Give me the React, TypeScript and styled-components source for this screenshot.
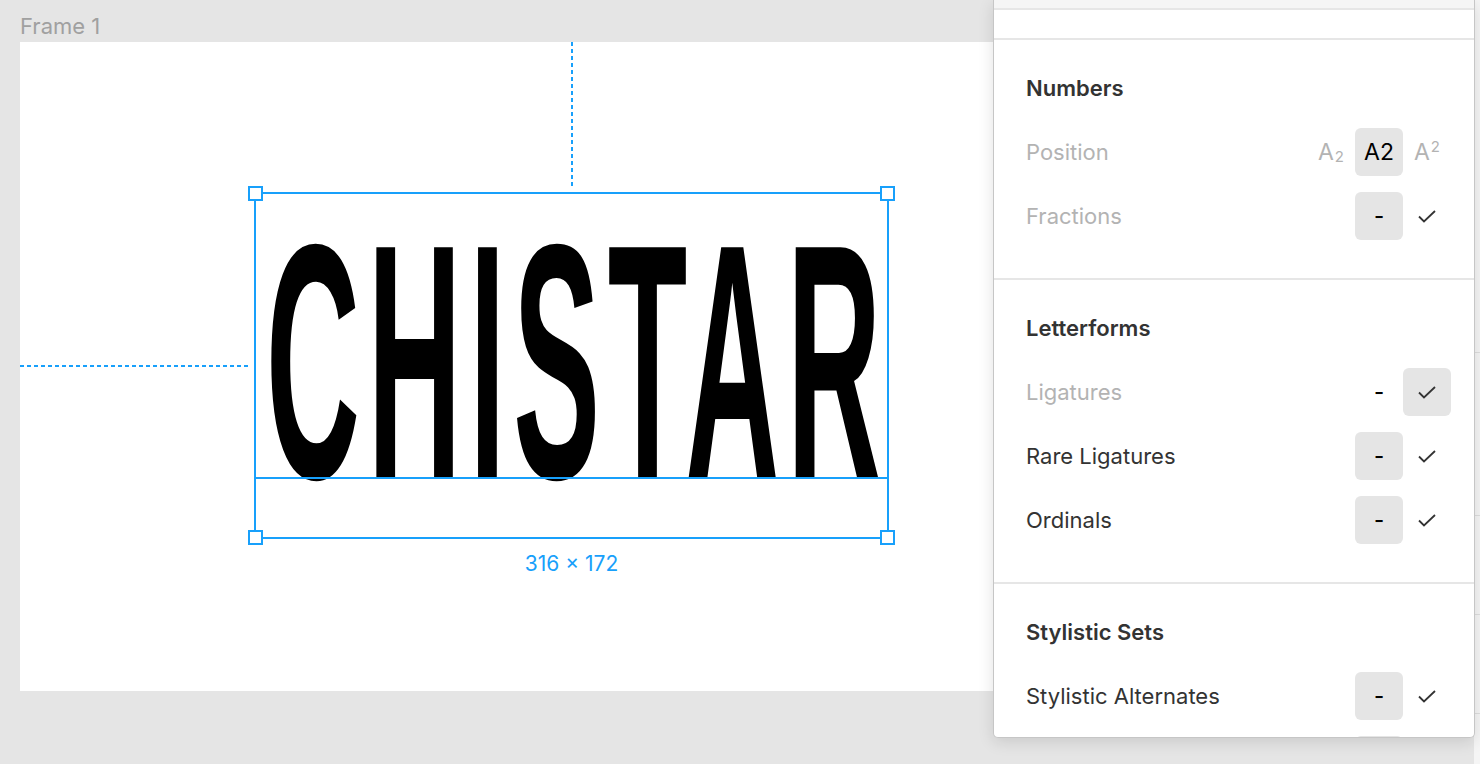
import React from "react"
import styled, {createGlobalStyle} from "styled-components"

const GlobalStyle = createGlobalStyle`
    html, body {
        margin: 0;
        padding: 0;
        height: 100%;
        overflow: hidden;
        font-family: Inter, "Noto Sans", sans-serif;
    }
`;

const BLUE = "#18a0fb";

const Page = styled.div`
    position: relative;
    display: flex;
    height: 100vh;
    overflow: hidden;
`;

const Canvas = styled.main`
    flex: 1;
    display: flex;
    flex-direction: column;
    padding: 0 20px;
    background: #e5e5e5;
    overflow: hidden;
`;

const FrameLabel = styled.div`
    height: 42px;
    box-sizing: border-box;
    padding-top: 13px;
    font-size: 22px;
    line-height: 26px;
    color: #a0a0a0;
`;

const Frame = styled.div`
    position: relative;
    flex-shrink: 0;
    width: 1000px;
    height: 649px;
    background: #fff;
`;

const VGuide = styled.div`
    position: absolute;
    left: 551px;
    top: 0;
    width: 2px;
    height: 145px;
    background: repeating-linear-gradient(to bottom, ${BLUE} 0 4px, transparent 4px 7px);
`;

const HGuide = styled.div`
    position: absolute;
    left: 0;
    top: 323px;
    width: 230px;
    height: 2px;
    background: repeating-linear-gradient(to right, ${BLUE} 0 4px, transparent 4px 7px);
`;

const Glyphs = styled.div`
    position: absolute;
    left: 246px;
    top: 326px;
    font-family: "Liberation Sans", Arial, sans-serif;
    font-weight: 700;
    font-size: 130px;
    line-height: 130px;
    letter-spacing: 7.8px;
    color: #000;
    white-space: nowrap;
    transform-origin: 0 110px;
    transform: scaleY(2.58);
`;

const Selection = styled.div`
    position: absolute;
    left: 234px;
    top: 150px;
    width: 635px;
    height: 347px;
    box-sizing: border-box;
    border: 2px solid ${BLUE};
`;

const Baseline = styled.div`
    position: absolute;
    left: 0;
    right: 0;
    top: 283px;
    height: 2px;
    background: ${BLUE};
`;

const Handle = styled.div<{$right?: boolean; $bottom?: boolean}>`
    position: absolute;
    width: 15px;
    height: 15px;
    box-sizing: border-box;
    border: 2px solid ${BLUE};
    background: #fff;
    ${(p) => (p.$right ? "right: -8px;" : "left: -8px;")}
    ${(p) => (p.$bottom ? "bottom: -8px;" : "top: -8px;")}
`;

const SizeLabel = styled.div`
    position: absolute;
    left: 0;
    right: 0;
    top: calc(100% + 14px);
    text-align: center;
    font-size: 21px;
    line-height: 26px;
    color: ${BLUE};
`;

const Sidebar = styled.aside`
    width: 6px;
    display: flex;
    flex-direction: column;
    background: #f5f5f5;
`;

const SidebarBlock = styled.div<{$h: number}>`
    height: ${(p) => p.$h}px;
    flex-shrink: 0;
    border-top: 1px solid #dedede;
    &:first-child{
        border-top: none;
    }
`;

const Panel = styled.section`
    position: absolute;
    left: 993px;
    top: 0;
    width: 482px;
    height: 738px;
    box-sizing: border-box;
    background: #fff;
    border: 1px solid #c6c6c6;
    border-top: none;
    border-radius: 0 0 5px 5px;
    box-shadow: 0 4px 16px rgba(0, 0, 0, 0.12);
    overflow: hidden;
`;

const TopStrip = styled.div`
    height: 8px;
    background: #f5f5f5;
    border-bottom: 2px solid #e6e6e6;
`;

const Spacer = styled.div`
    height: 28px;
    border-bottom: 2px solid #e6e6e6;
`;

const Section = styled.div`
    display: flex;
    flex-direction: column;
    gap: 16px;
    padding: 32px 23px 38px 32px;
    border-bottom: 2px solid #e6e6e6;
`;

const Title = styled.h3`
    margin: 0 0 8px;
    height: 32px;
    font-size: 22px;
    line-height: 32px;
    font-weight: 600;
    color: #333;
`;

const Row = styled.div`
    display: flex;
    align-items: center;
    height: 48px;
`;

const Label = styled.span<{$muted?: boolean}>`
    flex: 1;
    font-size: 22px;
    line-height: 26px;
    color: ${(p) => (p.$muted ? "#b3b3b3" : "#333")};
`;

const Controls = styled.div`
    display: flex;
`;

const Slot = styled.div<{$active?: boolean; $muted?: boolean}>`
    width: 48px;
    height: 48px;
    display: flex;
    align-items: center;
    justify-content: center;
    border-radius: 6px;
    background: ${(p) => (p.$active ? "#e5e5e5" : "transparent")};
    color: ${(p) => (p.$muted ? "#b3b3b3" : "#000")};
    font-size: 23px;
    line-height: 26px;
`;

const Dash = styled.span`
    font-size: 22px;
    font-weight: 500;
`;

const Small = styled.span<{$up?: boolean}>`
    font-size: 15px;
    position: relative;
    top: ${(p) => (p.$up ? "-5px" : "5px")};
    margin-left: 1px;
`;

const Check: React.FC = () => (
    <svg width="18" height="13" viewBox="0 0 18 13" fill="none">
        <polyline points="1,6.5 6,11.5 17,1" stroke="#333" strokeWidth="1.8" />
    </svg>
);

type Toggle = {label: string; muted?: boolean; on?: boolean};

const ToggleRow: React.FC<Toggle> = ({label, muted, on}) => (
    <Row>
        <Label $muted={muted}>{label}</Label>
        <Controls>
            <Slot $active={!on}><Dash>-</Dash></Slot>
            <Slot $active={on}><Check /></Slot>
        </Controls>
    </Row>
);

const App: React.FC = () => {
    return (
        <Page>
            <GlobalStyle />
            <Canvas>
                <FrameLabel>Frame 1</FrameLabel>
                <Frame>
                    <VGuide />
                    <HGuide />
                    <Glyphs>CHISTAR</Glyphs>
                    <Selection>
                        <Baseline />
                        <Handle />
                        <Handle $right />
                        <Handle $bottom />
                        <Handle $right $bottom />
                        <SizeLabel>316 × 172</SizeLabel>
                    </Selection>
                </Frame>
            </Canvas>
            <Sidebar>
                <SidebarBlock $h={352} />
                <SidebarBlock $h={162} />
                <SidebarBlock $h={98} />
                <SidebarBlock $h={98} />
                <SidebarBlock $h={60} />
            </Sidebar>
            <Panel>
                <TopStrip />
                <Spacer />
                <Section>
                    <Title>Numbers</Title>
                    <Row>
                        <Label $muted>Position</Label>
                        <Controls>
                            <Slot $muted>A<Small>2</Small></Slot>
                            <Slot $active>A2</Slot>
                            <Slot $muted>A<Small $up>2</Small></Slot>
                        </Controls>
                    </Row>
                    <ToggleRow label="Fractions" muted />
                </Section>
                <Section>
                    <Title>Letterforms</Title>
                    <ToggleRow label="Ligatures" muted on />
                    <ToggleRow label="Rare Ligatures" />
                    <ToggleRow label="Ordinals" />
                </Section>
                <Section>
                    <Title>Stylistic Sets</Title>
                    <ToggleRow label="Stylistic Alternates" />
                    <Row>
                        <Label />
                        <Controls>
                            <Slot $active />
                            <Slot />
                        </Controls>
                    </Row>
                </Section>
            </Panel>
        </Page>
    )
}

export default App;
